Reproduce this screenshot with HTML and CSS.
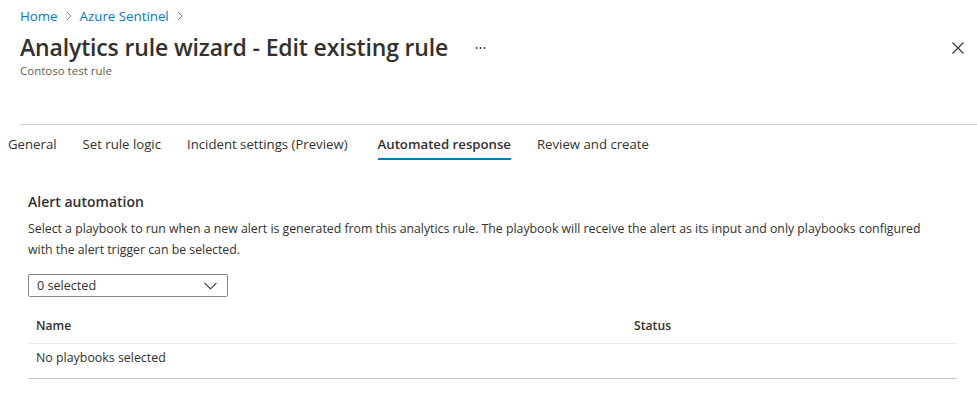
FILE: index.html
```html
<!DOCTYPE html>
<html lang="en">
<head>
<meta charset="utf-8">
<title>Analytics rule wizard - Edit existing rule</title>
<link rel="stylesheet" href="styles.css">
</head>
<body>
<div class="page">
  <header class="header">
    <nav class="crumbs">
      <a class="crumb" href="#">Home</a>
      <svg class="sep" width="8" height="10" viewBox="0 0 8 10"><path d="M2 1 L6 5 L2 9" fill="none" stroke="#8a8886" stroke-width="1"/></svg>
      <a class="crumb" href="#">Azure Sentinel</a>
      <svg class="sep" width="8" height="10" viewBox="0 0 8 10"><path d="M2 1 L6 5 L2 9" fill="none" stroke="#8a8886" stroke-width="1"/></svg>
    </nav>
    <div class="title-row">
      <h1 class="title">Analytics rule wizard - Edit existing rule</h1>
      <svg class="more" width="12" height="4" viewBox="0 0 12 4" aria-label="More"><circle cx="1.5" cy="2" r="0.9" fill="#323130"/><circle cx="5.5" cy="2" r="0.9" fill="#323130"/><circle cx="9.5" cy="2" r="0.9" fill="#323130"/></svg>
      <span class="spacer"></span>
      <svg class="close" width="12" height="12" viewBox="0 0 12 12"><path d="M0.5 0.5 L11.5 11.5 M11.5 0.5 L0.5 11.5" stroke="#323130" stroke-width="1.1"/></svg>
    </div>
    <div class="subtitle">Contoso test rule</div>
  </header>
  <div class="divider"></div>
  <nav class="tabs">
    <span class="tab">General</span>
    <span class="tab">Set rule logic</span>
    <span class="tab">Incident settings (Preview)</span>
    <span class="tab active">Automated response</span>
    <span class="tab">Review and create</span>
  </nav>
  <section class="content">
    <h2 class="section-title">Alert automation</h2>
    <p class="desc">Select a playbook to run when a new alert is generated from this analytics rule. The playbook will receive the alert as its input and only playbooks configured with the alert trigger can be selected.</p>
    <div class="dropdown">
      <span>0 selected</span>
      <svg width="13" height="8" viewBox="0 0 13 8"><path d="M0.5 0.8 L6.5 6.8 L12.5 0.8" fill="none" stroke="#323130" stroke-width="1.1"/></svg>
    </div>
    <div class="table">
      <div class="row head">
        <span class="col-name">Name</span>
        <span class="col-status">Status</span>
      </div>
      <div class="row body">
        <span class="col-name">No playbooks selected</span>
        <span class="col-status"></span>
      </div>
    </div>
  </section>
</div>
</body>
</html>
```

FILE: styles.css
```css
* { box-sizing: border-box; }
html, body { margin: 0; padding: 0; background: #fff; }
body {
  font-family: "Open Sans", "Noto Sans", sans-serif;
  color: #323130;
  font-size: 12.4px;
}
.page { width: 977px; height: 410px; overflow: hidden; }
.header { padding: 7px 13px 0 20px; }
.crumbs { display: flex; align-items: center; height: 18px; gap: 6px; }
.crumb { color: #0078d4; text-decoration: none; font-size: 13.3px; line-height: 18px; }
.sep { margin: 0 1px; }
.title-row { display: flex; align-items: center; height: 32px; margin-top: 6px; }
.title { margin: 0; font-size: 23px; font-weight: 600; line-height: 32px; color: #323130; letter-spacing: -0.15px; }
.more { margin-left: 27px; margin-top: 2px; }
.spacer { flex: 1; }
.close { margin-top: 2px; }
.subtitle { font-size: 11.5px; line-height: 16px; color: #605e5c; }
.divider { margin: 45px 0 0 20px; height: 1px; background: #d2d0ce; }
.tabs { display: flex; padding-left: 8px; margin-top: 10px; }
.tab { font-size: 13.2px; line-height: 18px; padding: 0 0 5px 0; margin-right: 26px; color: #323130; border-bottom: 2px solid transparent; }
.tab.active { font-weight: 600; border-bottom-color: #0078d4; margin-left: 4px; }
.content { padding: 0 20px 0 28px; margin-top: 32px; }
.section-title { margin: 0; font-size: 14px; font-weight: 600; line-height: 20px; }
.desc { margin: 6px 0 0 0; font-size: 12.3px; line-height: 21px; max-width: 910px; }
.dropdown {
  margin-top: 14px;
  width: 200px; height: 23px;
  border: 1px solid #8a8886; border-radius: 2px;
  display: flex; align-items: center; justify-content: space-between;
  padding: 0 10px 0 8px;
  font-size: 12.6px;
}
.table { margin-top: 10px; width: 929px; }
.row { display: flex; padding-left: 8px; }
.row.head { height: 37px; align-items: center; border-bottom: 1px solid #edebe9; font-weight: 600; font-size: 12.2px; }
.row.body { height: 35px; padding-top: 6px; line-height: 16px; border-bottom: 1px solid #c8c6c4; }
.col-name { width: 598px; }
.col-status { flex: 1; }
```
